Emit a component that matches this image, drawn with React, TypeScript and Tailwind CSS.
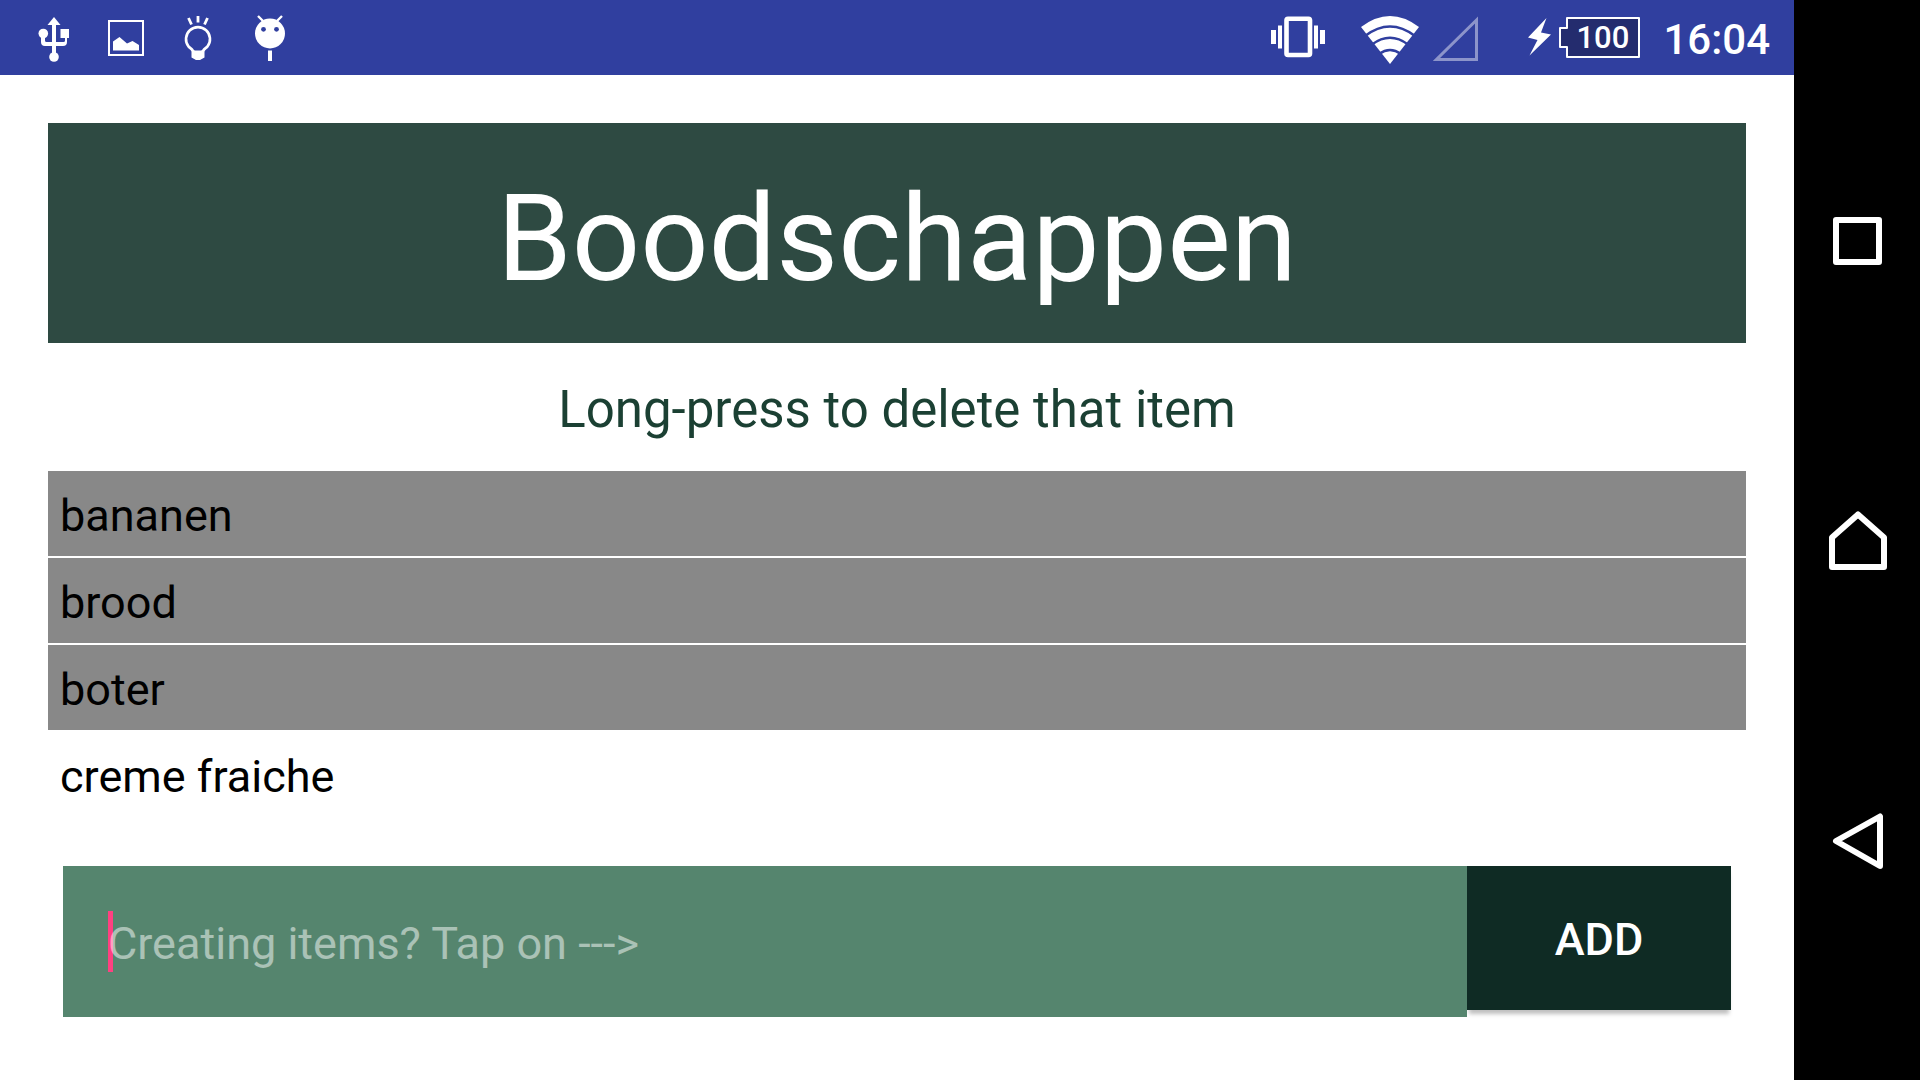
import { useState } from "react";
import type { ReactNode } from "react";

type IconProps = { label: string; children: ReactNode };

function NotificationIcon({ label, children }: IconProps) {
  return (
    <svg role="img" aria-label={label} viewBox="0 0 72 75" className="h-[75px] w-[72px] fill-white">
      {children}
    </svg>
  );
}

function StatusBar() {
  return (
    <header className="flex h-[75px] shrink-0 items-center justify-between bg-[#303f9f] pl-[18px] pr-6 text-white">
      <div className="flex">
        <NotificationIcon label="USB connected">
          <path d="M36 17 42.500 25H38V42H45.500Q47 42 47 40.500V38H42.500V29H51V38H49V42Q49 46 45 46H38V53H34V46H27Q23 46 23 42V36H27V40.500Q27 42 28.500 42H34V25H29.500Z" />
          <circle cx="25.300" cy="33.500" r="4.800" />
          <circle cx="36" cy="57" r="4.800" />
        </NotificationIcon>
        <NotificationIcon label="Screenshot saved">
          <path fillRule="evenodd" d="M18 20H54V56H18ZM20 22V54H52V22Z" />
          <path d="M23 41.500 29.500 37 37 43.500 42.500 41 49 45V50.500H23Z" />
        </NotificationIcon>
        <NotificationIcon label="Tip">
          <g fill="none" stroke="white" strokeLinecap="round">
            <path strokeWidth="2.600" d="M31 51C30 49 28 48 26.500 46.500A12 12 0 1 1 45.500 46.500C44 48 42 49 41 51" />
            <path strokeWidth="2.800" strokeLinecap="butt" d="M36 16V22.500M26.500 18 29.500 24.500M45.500 18 42.500 24.500" />
          </g>
          <path d="M29.500 49 33 50.500H39L42.500 49V57.500L38 60H34L29.500 57.500Z" />
        </NotificationIcon>
        <NotificationIcon label="Android debugging">
          <path stroke="white" strokeWidth="2.400" d="M24 16 29 21M48 16 43 21" />
          <circle cx="36" cy="33.500" r="15" />
          <path d="M34 50.500H38V61H34Z" />
          <circle cx="29.500" cy="29.300" r="2.400" fill="#303f9f" />
          <circle cx="42.500" cy="29.300" r="2.400" fill="#303f9f" />
        </NotificationIcon>
      </div>

      <div className="flex items-center">
        <svg role="img" aria-label="Vibrate" viewBox="0 0 54 75" className="h-[75px] w-[54px] fill-white">
          <path d="M0 30H5V44H0ZM7 25.500H11V48.500H7ZM43 25.500H47V48.500H43ZM49 30H54V44H49Z" />
          <rect x="15.500" y="18.800" width="23.500" height="36.200" rx="1.500" fill="none" stroke="white" strokeWidth="4.600" />
        </svg>
        <svg role="img" aria-label="Wi-Fi" viewBox="0 0 58 75" className="ml-9 h-[75px] w-[58px] fill-white">
          <path d="M0 27Q29 5 58 27L29 64Z" />
          <g fill="none" stroke="#303f9f" strokeWidth="2.600">
            <path d="M4 36Q29 17 54 36" />
            <path d="M11 44.500Q29 31 47 44.500" />
            <path d="M18 54Q29 46 40 54" />
          </g>
        </svg>
        <svg role="img" aria-label="No signal" viewBox="0 0 45 75" className="ml-[14px] h-[75px] w-[45px]">
          <path d="M3.500 59.500H43.500V20Z" fill="none" stroke="#8c94ca" strokeWidth="3" />
        </svg>
        <svg role="img" aria-label="Charging" viewBox="0 0 24 75" className="ml-[50px] h-[75px] w-6 fill-white">
          <path d="M18.500 18 0 37.500 9.500 40 1.500 55.500 23 34.500 13 32.500Z" />
        </svg>
        <div className="relative ml-[7px] h-[41px] w-[81px]">
          <svg aria-hidden="true" viewBox="0 0 81 41" className="h-full w-full">
            <path d="M8 1H80V40H8V30H1V11H8Z" fill="#242c6e" stroke="white" strokeWidth="2" strokeLinejoin="round" />
          </svg>
          <span className="absolute inset-0 flex items-center justify-center pl-1.5 text-[31px] font-medium leading-none">100</span>
        </div>
        <time className="ml-[23px] pt-1 text-[42px] font-medium leading-none">16:04</time>
      </div>
    </header>
  );
}

function NavigationBar() {
  const button = "flex h-[300px] w-full items-center justify-center";
  const icon = "size-[60px] fill-none stroke-white stroke-[6]";
  return (
    <nav aria-label="System" className="flex w-[126px] shrink-0 flex-col items-center justify-center bg-black">
      <button type="button" aria-label="Recent apps" className={button}>
        <svg viewBox="0 0 60 60" className={icon} strokeLinejoin="round">
          <rect x="9" y="10" width="43" height="42" />
        </svg>
      </button>
      <button type="button" aria-label="Home" className={button}>
        <svg viewBox="0 0 60 60" className={icon} strokeLinejoin="round">
          <path d="M5 57V27.500L31 4.500 57 27.500V57Z" />
        </svg>
      </button>
      <button type="button" aria-label="Back" className={button}>
        <svg viewBox="0 0 60 60" className={icon} strokeLinejoin="round">
          <path d="M53 6.500V56L9 31Z" />
        </svg>
      </button>
    </nav>
  );
}

const initialItems = [
  { name: "bananen", done: true },
  { name: "brood", done: true },
  { name: "boter", done: true },
  { name: "creme fraiche", done: false },
];

export default function App() {
  const [items, setItems] = useState(initialItems);
  const [draft, setDraft] = useState("");

  const toggle = (index: number) =>
    setItems(items.map((item, i) => (i === index ? { ...item, done: !item.done } : item)));

  return (
    <div className="flex min-h-screen bg-white font-[Roboto,sans-serif] text-black">
      <div className="flex min-w-0 flex-1 flex-col">
        <StatusBar />
        <main className="flex flex-1 flex-col p-12">
          <h1 className="bg-[#2e4a42] pb-[34px] pt-[46px] text-center text-[120px] leading-[140px] text-white">Boodschappen</h1>
          <p className="pb-[30px] pt-9 text-center text-[51px] leading-[62px] text-[#1b4033]">
            Long-press to delete that item
          </p>
          <ul className="flex flex-1 flex-col gap-0.5">
            {items.map((item, index) => (
              <li key={item.name}>
                <button
                  type="button"
                  onClick={() => toggle(index)}
                  className={
                    "block h-[85px] w-full px-3 pt-1 text-left text-[45px] leading-[53px] " +
                    (item.done ? "bg-[#888888]" : "bg-white")
                  }
                >
                  {item.name}
                </button>
              </li>
            ))}
          </ul>
          <form
            className="mx-[15px] mb-[15px] flex items-start"
            onSubmit={(event) => {
              event.preventDefault();
              if (draft) {
                setItems([...items, { name: draft, done: false }]);
                setDraft("");
              }
            }}
          >
            <div className="relative min-w-0 flex-1 bg-[#55856e]">
              <span aria-hidden="true" className="absolute left-[45px] top-[45px] h-[61px] w-[5px] bg-[#ff4081]" />
              <input
                aria-label="New item"
                value={draft}
                onChange={(event) => setDraft(event.target.value)}
                placeholder="Creating items? Tap on --->"
                className="relative block h-[151px] w-full bg-transparent px-[45px] pt-1 text-[45px] text-white outline-none placeholder:text-white/50"
              />
            </div>
            <button
              type="submit"
              className="h-36 w-[264px] bg-[#0f2b24] pt-[3px] text-[45px] font-medium text-white shadow-[0_6px_4px_-2px_rgba(0,0,0,0.25)]"
            >
              ADD
            </button>
          </form>
        </main>
      </div>
      <NavigationBar />
    </div>
  );
}
